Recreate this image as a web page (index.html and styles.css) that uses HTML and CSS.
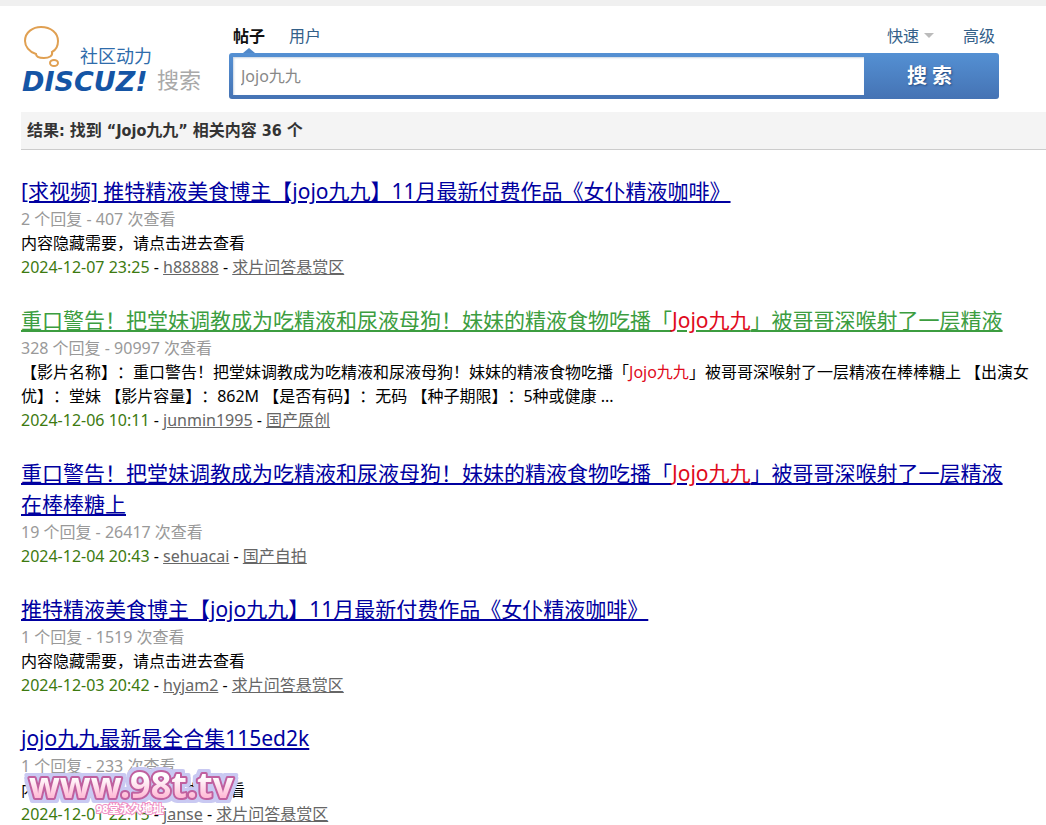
FILE: index.html
```
<!DOCTYPE html>
<html lang="zh-CN">
<head>
<meta charset="utf-8">
<title>搜索</title>
<link rel="stylesheet" href="styles.css">
</head>
<body>
<header class="header">
  <a class="logo" href="#" aria-label="Discuz! 搜索">
    <svg width="184" height="75" viewBox="0 0 184 75">
      <g fill="none" stroke="#e0a052" stroke-width="2">
        <path d="M15 30C8 28 4 22 4 17C4 8 12 3 20 3C30 3 37 9 37 17C37 22 35 26 31 28C32 32 28 34 23 34C18 34 15 33 15 30Z"/>
        <ellipse cx="33" cy="39" rx="4" ry="3"/>
      </g>
      <text class="logo-motto" x="59" y="39">社区动力</text>
      <text class="logo-name" x="1" y="67">DISCUZ!</text>
      <text class="logo-search" x="136" y="64">搜索</text>
    </svg>
  </a>
  <form class="search">
    <nav class="tabs">
      <a class="tab tab-current" href="#">帖子</a>
      <a class="tab" href="#">用户</a>
      <a class="tab tab-quick" href="#">快速<span class="caret"></span></a>
      <a class="tab" href="#">高级</a>
    </nav>
    <div class="box">
      <input class="field" type="text" value="Jojo九九" aria-label="搜索内容">
      <button class="submit" type="button">搜 索</button>
    </div>
  </form>
</header>
<main class="main">
  <h1 class="summary">结果: 找到 “Jojo九九” 相关内容 36 个</h1>
  <ul class="results">
    <li>
      <h2 class="title"><a href="#">[求视频] 推特精液美食博主【jojo九九】11月最新付费作品《女仆精液咖啡》</a></h2>
      <p class="stats">2 个回复 - 407 次查看</p>
      <p>内容隐藏需要，请点击进去查看</p>
      <p><span class="date">2024-12-07 23:25</span> - <a href="#">h88888</a> - <a href="#">求片问答悬赏区</a></p>
    </li>
    <li>
      <h2 class="title title-green"><a href="#">重口警告！把堂妹调教成为吃精液和尿液母狗！妹妹的精液食物吃播「<em>Jojo九九</em>」被哥哥深喉射了一层精液</a></h2>
      <p class="stats">328 个回复 - 90997 次查看</p>
      <p>【影片名称】：重口警告！把堂妹调教成为吃精液和尿液母狗！妹妹的精液食物吃播「<em>Jojo九九</em>」被哥哥深喉射了一层精液在棒棒糖上 【出演女优】：堂妹 【影片容量】：862M 【是否有码】：无码 【种子期限】：5种或健康 ...</p>
      <p><span class="date">2024-12-06 10:11</span> - <a href="#">junmin1995</a> - <a href="#">国产原创</a></p>
    </li>
    <li>
      <h2 class="title"><a href="#">重口警告！把堂妹调教成为吃精液和尿液母狗！妹妹的精液食物吃播「<em>Jojo九九</em>」被哥哥深喉射了一层精液在棒棒糖上</a></h2>
      <p class="stats">19 个回复 - 26417 次查看</p>
      <p><span class="date">2024-12-04 20:43</span> - <a href="#">sehuacai</a> - <a href="#">国产自拍</a></p>
    </li>
    <li>
      <h2 class="title"><a href="#">推特精液美食博主【jojo九九】11月最新付费作品《女仆精液咖啡》</a></h2>
      <p class="stats">1 个回复 - 1519 次查看</p>
      <p>内容隐藏需要，请点击进去查看</p>
      <p><span class="date">2024-12-03 20:42</span> - <a href="#">hyjam2</a> - <a href="#">求片问答悬赏区</a></p>
    </li>
    <li>
      <h2 class="title"><a href="#">jojo九九最新最全合集115ed2k</a></h2>
      <p class="stats">1 个回复 - 233 次查看</p>
      <p>内容隐藏需要，请点击进去查看</p>
      <p><span class="date">2024-12-01 22:15</span> - <a href="#">janse</a> - <a href="#">求片问答悬赏区</a></p>
    </li>
  </ul>
</main>
<svg class="watermark" width="224" height="62" viewBox="0 0 224 62">
  <defs>
    <linearGradient id="pink" x1="0" y1="0" x2="0" y2="1">
      <stop offset="0.35" stop-color="#fff"/>
      <stop offset="0.8" stop-color="#ffb4d2"/>
    </linearGradient>
  </defs>
  <text class="mark" x="10" y="38" fill="url(#pink)">www.98t.tv</text>
  <text class="mark-sub" x="77" y="53">98堂永久地址</text>
</svg>
</body>
</html>
```
FILE: styles.css
```
* {
  box-sizing: border-box;
}

html {
  overflow: hidden;
}

body {
  margin: 0;
  border-top: 6px solid #f0f0f0;
  background: #fff;
  color: #000;
  font: 16px/24px "Noto Sans", "Noto Sans CJK SC", sans-serif;
  text-spacing-trim: space-all;
}

h1, h2, p, ul {
  margin: 0;
  padding: 0;
}

em {
  color: #e00a1c;
  font-style: normal;
}

.header {
  display: flex;
  gap: 24px;
  padding: 18px 47px 13px 21px;
}

.logo {
  flex: none;
  width: 184px;
}

.logo svg {
  display: block;
}

.logo-motto {
  fill: #2f6cab;
  font-size: 18px;
}

.logo-name {
  fill: #1555a5;
  font-family: "DejaVu Sans", sans-serif;
  font-size: 27px;
  font-style: italic;
  font-weight: bold;
}

.logo-search {
  fill: #a9a9a9;
  font-size: 22px;
}

.search {
  flex: 1;
}

.tabs {
  display: flex;
  gap: 24px;
  height: 29px;
  padding: 0 4px;
}

.tab {
  color: #336089;
  text-decoration: none;
}

.tab-current {
  position: relative;
  color: #111;
  font-weight: bold;
}

.tab-current::after {
  content: "";
  position: absolute;
  left: 10px;
  bottom: 0;
  border: 6px solid transparent;
  border-top: 0;
  border-bottom: 5px solid #5088c9;
}

.tab-quick {
  margin-left: auto;
}

.caret {
  display: inline-block;
  margin-left: 5px;
  border: 5px solid transparent;
  border-top-color: #bbb;
  border-bottom: 0;
  vertical-align: 4px;
}

.tab-quick + .tab {
  margin-left: 5px;
}

.box {
  display: flex;
  height: 46px;
  padding: 4px 0 4px 4px;
  border-radius: 3px;
  background: linear-gradient(#5490d3, #4573b4);
}

.field {
  flex: 1;
  min-width: 0;
  padding: 0 8px;
  border: 0;
  background: #fff;
  box-shadow: inset 1px 1px 2px #c8d4e2;
  color: #888;
  font: inherit;
}

.submit {
  width: 135px;
  padding: 0 4px 0 0;
  border: 0;
  background: none;
  color: #fff;
  font: bold 20px/24px "Noto Sans", "Noto Sans CJK SC", sans-serif;
  text-shadow: 1px 1px 2px #234a80;
}

.main {
  padding-left: 21px;
}

.summary {
  padding: 7px 6px 6px;
  border-bottom: 1px solid #ccc;
  background: #f4f4f4;
  color: #333;
  font: bold 16px/24px "DejaVu Sans Condensed", "Noto Sans CJK SC", sans-serif;
}

.results {
  display: grid;
  gap: 26px;
  padding: 26px 8px 0 0;
  list-style: none;
}

.results p a {
  color: #666;
}

.title {
  padding-right: 16px;
  font-size: 21px;
  font-weight: normal;
  line-height: 31px;
}

.title a {
  color: #0000a0;
}

.title-green a {
  color: #3c9d40;
}

.results .stats {
  color: #999;
}

.date {
  color: #3d7a10;
}

.watermark {
  position: absolute;
  left: 19px;
  top: 760px;
}

.mark {
  stroke: #c0609f;
  stroke-width: 4px;
  stroke-linejoin: round;
  paint-order: stroke;
  filter: drop-shadow(3px 0 0 #c9c9f2) drop-shadow(-3px 0 0 #c9c9f2) drop-shadow(0 3px 0 #c9c9f2) drop-shadow(0 -3px 0 #c9c9f2);
  font-size: 36px;
  font-weight: bold;
}

.mark-sub {
  fill: #fff;
  stroke: #ef8fc4;
  stroke-width: 2px;
  paint-order: stroke;
  font-size: 11px;
  font-weight: bold;
}
```
